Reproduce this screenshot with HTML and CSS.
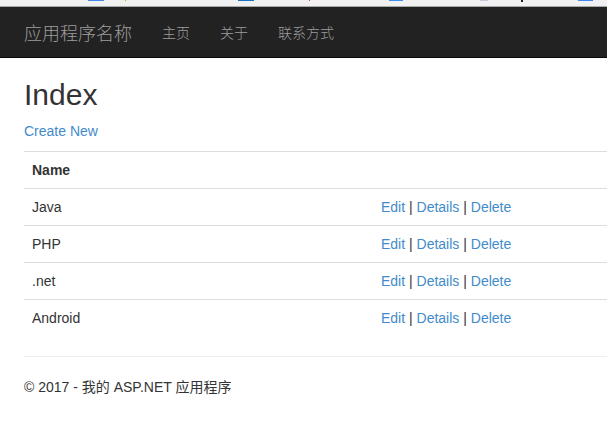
FILE: index.html
```html
<!DOCTYPE html>
<html lang="zh-CN">
<head>
<meta charset="utf-8">
<title>Index - 我的 ASP.NET 应用程序</title>
<link rel="stylesheet" href="styles.css">
</head>
<body>
<div class="topstrip"></div>
<nav class="navbar">
  <a class="brand" href="#">应用程序名称</a>
  <ul class="nav">
    <li><a href="#">主页</a></li>
    <li><a href="#">关于</a></li>
    <li><a href="#">联系方式</a></li>
  </ul>
</nav>
<main class="body-content">
  <h2 class="title">Index</h2>
  <p class="create"><a href="#">Create New</a></p>
  <table class="table">
    <tr>
      <th class="col-name">Name</th>
      <th></th>
    </tr>
    <tr>
      <td>Java</td>
      <td><a href="#">Edit</a> | <a href="#">Details</a> | <a href="#">Delete</a></td>
    </tr>
    <tr>
      <td>PHP</td>
      <td><a href="#">Edit</a> | <a href="#">Details</a> | <a href="#">Delete</a></td>
    </tr>
    <tr>
      <td>.net</td>
      <td><a href="#">Edit</a> | <a href="#">Details</a> | <a href="#">Delete</a></td>
    </tr>
    <tr>
      <td>Android</td>
      <td><a href="#">Edit</a> | <a href="#">Details</a> | <a href="#">Delete</a></td>
    </tr>
  </table>
  <hr class="rule">
  <footer class="footer">
    <p>&copy; 2017 - 我的 ASP.NET 应用程序</p>
  </footer>
</main>
</body>
</html>
```
FILE: styles.css
```css
html, body {
  margin: 0;
  padding: 0;
  background: #fff;
  overflow: hidden;
}
body {
  font-family: "Liberation Sans", Arial, "Noto Sans CJK SC", sans-serif;
  font-size: 14px;
  line-height: 20px;
  color: #333;
  width: 607px;
}
a {
  color: #428bca;
  text-decoration: none;
}

.topstrip {
  height: 6px;
  border-bottom: 1px solid #a9a9a9;
  background-color: #f0f0f0;
  background-image:
    linear-gradient(#3f86ef, #3f86ef),
    linear-gradient(#e0a030, #e0a030),
    linear-gradient(#1a72c4, #1a72c4),
    linear-gradient(#d8503a, #d8503a),
    linear-gradient(#3c8ef0, #3c8ef0),
    linear-gradient(#c8c8d8, #c8c8d8),
    linear-gradient(#202020, #202020),
    linear-gradient(#3f86ef, #3f86ef);
  background-repeat: no-repeat;
  background-size: 16px 1px, 1px 1px, 16px 1px, 1px 1px, 14px 1px, 8px 1px, 2px 2px, 15px 1px;
  background-position: 88px 0, 125px 0, 238px 0, 309px 0, 389px 0, 480px 0, 521px 0, 578px 0;
}

.navbar {
  display: flex;
  align-items: center;
  height: 50px;
  background: #222;
  border-bottom: 1px solid #080808;
  padding-left: 9px;
  font-family: "Noto Sans CJK SC", "Liberation Sans", sans-serif;
}
.brand {
  display: block;
  padding: 15px;
  font-size: 18px;
  line-height: 20px;
  font-weight: 300;
  color: #9d9d9d;
}
.nav {
  display: flex;
  margin: 0;
  padding: 0;
  list-style: none;
}
.nav a {
  display: block;
  padding: 15px;
  font-size: 14px;
  line-height: 20px;
  font-weight: 300;
  color: #9d9d9d;
}

.body-content {
  padding-left: 24px;
}
.title {
  margin: 20px 0 10px;
  font-size: 30px;
  font-weight: 500;
  line-height: 33px;
  color: #333;
}
.create {
  margin: 0 0 10px;
}
.table {
  width: 583px;
  border-collapse: collapse;
  border-spacing: 0;
  margin-bottom: 20px;
}
.table th,
.table td {
  padding: 8px;
  line-height: 20px;
  text-align: left;
  vertical-align: top;
  border-top: 1px solid #ddd;
}
.table th {
  font-weight: bold;
}
.col-name {
  width: 333px;
}
.rule {
  margin: 20px 0;
  border: 0;
  border-top: 1px solid #eee;
  width: 583px;
}
.footer p {
  margin: 0 0 10px;
}
```
